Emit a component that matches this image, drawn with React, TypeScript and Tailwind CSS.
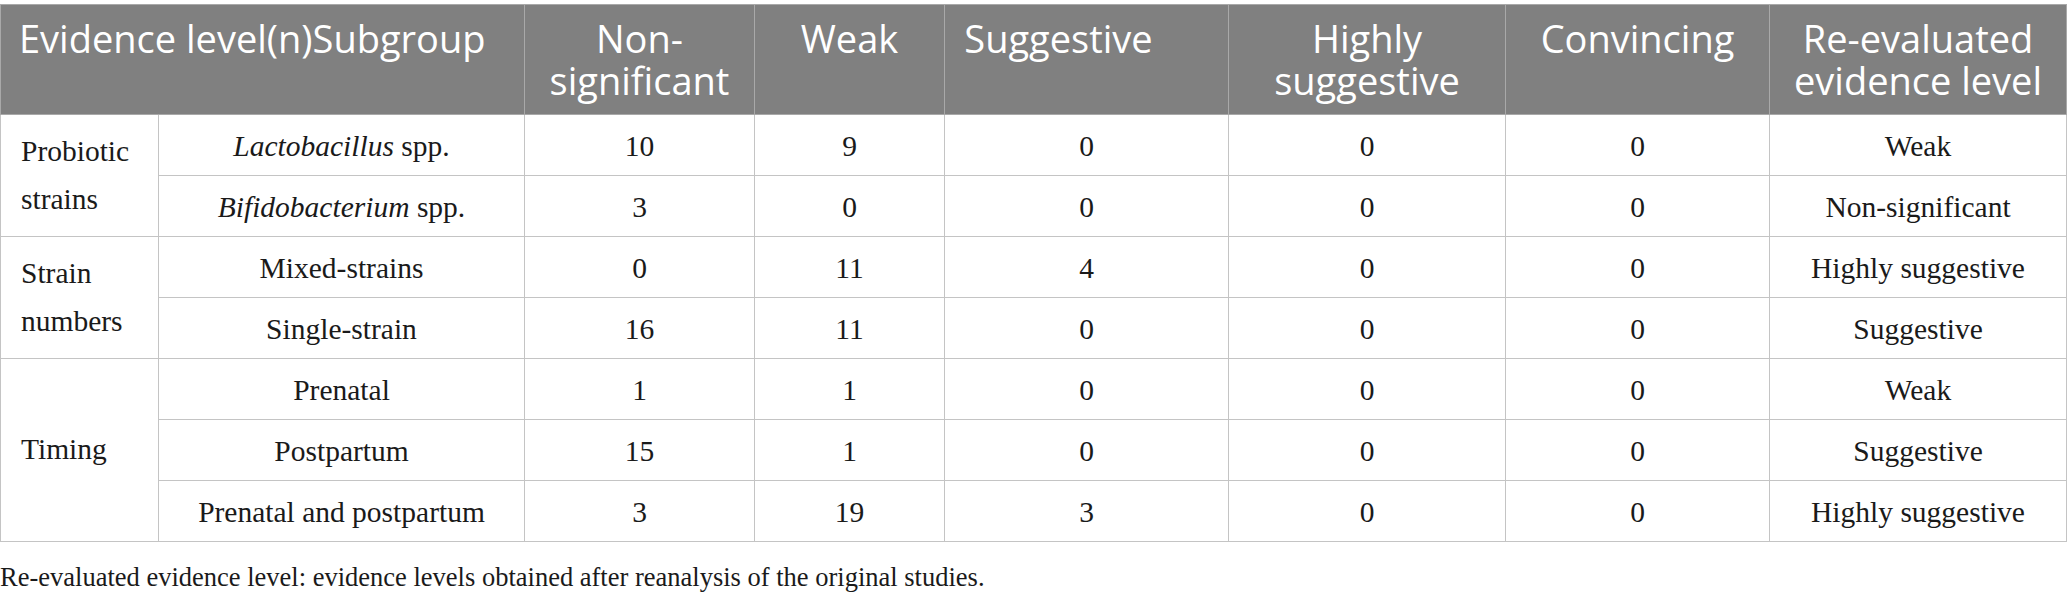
import type { ReactNode } from 'react';

type Row = {
  group?: { label: string; span: number };
  subgroup: ReactNode;
  values: number[];
  level: string;
};

const rows: Row[] = [
  {
    group: { label: 'Probiotic strains', span: 2 },
    subgroup: (
      <>
        <i>Lactobacillus</i> spp.
      </>
    ),
    values: [10, 9, 0, 0, 0],
    level: 'Weak',
  },
  {
    subgroup: (
      <>
        <i>Bifidobacterium</i> spp.
      </>
    ),
    values: [3, 0, 0, 0, 0],
    level: 'Non-significant',
  },
  {
    group: { label: 'Strain numbers', span: 2 },
    subgroup: 'Mixed-strains',
    values: [0, 11, 4, 0, 0],
    level: 'Highly suggestive',
  },
  { subgroup: 'Single-strain', values: [16, 11, 0, 0, 0], level: 'Suggestive' },
  {
    group: { label: 'Timing', span: 3 },
    subgroup: 'Prenatal',
    values: [1, 1, 0, 0, 0],
    level: 'Weak',
  },
  { subgroup: 'Postpartum', values: [15, 1, 0, 0, 0], level: 'Suggestive' },
  { subgroup: 'Prenatal and postpartum', values: [3, 19, 3, 0, 0], level: 'Highly suggestive' },
];

const widths = [158, 366, 230, 190, 284, 277, 264, 297];

const th = 'border border-[#a9a9a9] align-top pt-[12px] font-normal text-center';
const td = 'border border-[#c4c4c4] h-[61px] align-middle text-center pt-[2px] pb-0';

export default function App() {
  return (
    <div className="bg-white pt-[4px] text-[#1a1a1a]" style={{ width: 2068 }}>
      <table className="table-fixed border-collapse w-[2066px]">
        <colgroup>
          {widths.map((w, i) => (
            <col key={i} style={{ width: w }} />
          ))}
        </colgroup>
        <thead>
          <tr className="bg-[#808080] text-white text-[38px] leading-[42px] font-['Open_Sans',sans-serif] h-[110px]">
            <th colSpan={2} className="border border-[#a9a9a9] align-top pt-[12px] pl-[18px] font-normal text-left">
              Evidence level(n)Subgroup
            </th>
            <th className={th}>
              Non-
              <br />
              significant
            </th>
            <th className={th}>Weak</th>
            <th className={th + ' pr-[56px]'}>Suggestive</th>
            <th className={th}>
              Highly
              <br />
              suggestive
            </th>
            <th className={th}>Convincing</th>
            <th className={th}>
              Re-evaluated
              <br />
              evidence level
            </th>
          </tr>
        </thead>
        <tbody className="font-['Liberation_Serif',serif] text-[29.5px]">
          {rows.map((r, i) => (
            <tr key={i}>
              {r.group && (
                <td
                  rowSpan={r.group.span}
                  className="border border-[#c4c4c4] align-middle text-left pl-[20px] pr-[8px] leading-[48px] pt-0 pb-[2px]"
                >
                  {r.group.label}
                </td>
              )}
              <td className={td}>{r.subgroup}</td>
              {r.values.map((v, j) => (
                <td key={j} className={td}>
                  {v}
                </td>
              ))}
              <td className={td}>{r.level}</td>
            </tr>
          ))}
        </tbody>
      </table>
      <p className="font-['Liberation_Serif',serif] text-[26.5px] leading-[30px] mt-[20px]">
        Re-evaluated evidence level: evidence levels obtained after reanalysis of the original studies.
      </p>
    </div>
  );
}
